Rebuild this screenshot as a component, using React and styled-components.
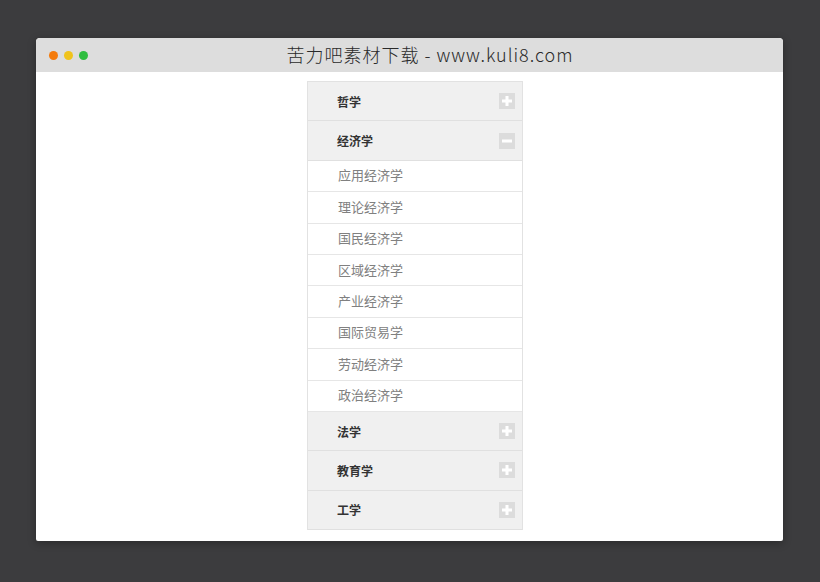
import React, { useState } from "react";
import styled, { createGlobalStyle } from "styled-components";

const GlobalStyle = createGlobalStyle`
  html, body {
    margin: 0;
    padding: 0;
    background: #3c3c3e;
    font-family: "Noto Sans CJK SC", "Noto Sans", sans-serif;
  }
`;

const groups = [
  { title: "哲学", items: [] },
  {
    title: "经济学",
    items: [
      "应用经济学",
      "理论经济学",
      "国民经济学",
      "区域经济学",
      "产业经济学",
      "国际贸易学",
      "劳动经济学",
      "政治经济学",
    ],
  },
  { title: "法学", items: [] },
  { title: "教育学", items: [] },
  { title: "工学", items: [] },
];

const App = () => {
  const [open, setOpen] = useState(1);

  return (
    <>
      <GlobalStyle />
      <Page>
        <Window>
          <TitleBar>
            <Dots>
              <Dot color="#f47b0c" />
              <Dot color="#f0c31c" />
              <Dot color="#2fbd3f" />
            </Dots>
            <Title>苦力吧素材下载 - www.kuli8.com</Title>
          </TitleBar>
          <Content>
            <Accordion>
              {groups.map((g, i) => (
                <Group key={g.title}>
                  <Header onClick={() => setOpen(open === i ? -1 : i)}>
                    <span>{g.title}</span>
                    <Toggle>
                      <svg width="16" height="16" viewBox="0 0 16 16">
                        <rect width="16" height="16" fill="#dcdcdc" />
                        <rect x="3" y="6.5" width="10" height="3" fill="#fff" />
                        {open !== i && (
                          <rect x="6.5" y="3" width="3" height="10" fill="#fff" />
                        )}
                      </svg>
                    </Toggle>
                  </Header>
                  {open === i && g.items.length > 0 && (
                    <List>
                      {g.items.map((item) => (
                        <Item key={item}>{item}</Item>
                      ))}
                    </List>
                  )}
                </Group>
              ))}
            </Accordion>
          </Content>
        </Window>
      </Page>
    </>
  );
};

const Page = styled.div`
  padding: 38px 0 0 36px;
  height: 582px;
  box-sizing: border-box;
`;

const Window = styled.div`
  width: 747px;
  height: 503px;
  background: #fff;
  border-radius: 4px 4px 2px 2px;
  overflow: hidden;
  display: flex;
  flex-direction: column;
  box-shadow: 0 2px 8px rgba(0, 0, 0, 0.3);
`;

const TitleBar = styled.div`
  height: 34px;
  background: #dddddd;
  display: flex;
  align-items: center;
  flex-shrink: 0;
`;

const Dots = styled.div`
  display: flex;
  gap: 6px;
  padding-left: 13px;
`;

const Dot = styled.span`
  width: 9px;
  height: 9px;
  border-radius: 50%;
  background: ${(p) => p.color};
`;

const Title = styled.div`
  flex: 1;
  text-align: center;
  padding-right: 11px;
  font-size: 18px;
  font-weight: 300;
  color: #2a2a2a;
  letter-spacing: 1px;
  margin-top: -2px;
`;

const Content = styled.div`
  flex: 1;
  padding: 9px 0 0 271px;
`;

const Accordion = styled.div`
  width: 216px;
  border: 1px solid #e2e2e2;
  border-bottom: none;
  box-sizing: border-box;
`;

const Group = styled.div``;

const Header = styled.div`
  height: 39.4px;
  box-sizing: border-box;
  background: #f0f0f0;
  border-bottom: 1.5px solid #e0e0e0;
  display: flex;
  align-items: center;
  justify-content: space-between;
  padding: 0 7px 0 29px;
  font-size: 12px;
  font-weight: 700;
  color: #333;
  cursor: pointer;
`;

const Toggle = styled.span`
  display: flex;
  width: 16px;
  height: 16px;
`;

const List = styled.div`
  background: #fff;
`;

const Item = styled.div`
  height: 31.4px;
  box-sizing: border-box;
  border-bottom: 1px solid #e6e6e6;
  display: flex;
  align-items: center;
  padding: 0 0 2px 30px;
  font-size: 13px;
  color: #808080;
`;

export default App;
